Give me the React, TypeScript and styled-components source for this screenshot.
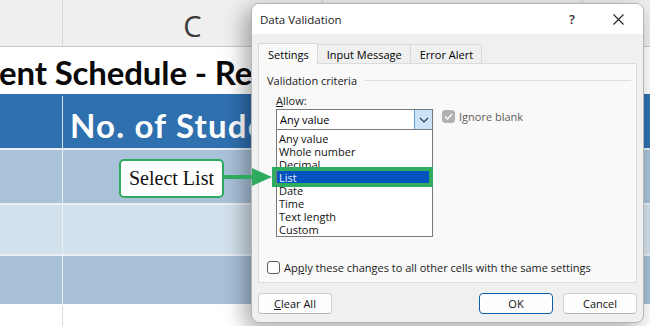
import React from 'react'
import styled, { createGlobalStyle } from 'styled-components'

const GlobalStyle = createGlobalStyle`
  html, body {
    margin: 0;
    padding: 0;
  }
  body {
    width: 650px;
    height: 326px;
    overflow: hidden;
    background: #ffffff;
  }
`

const options = ['Any value', 'Whole number', 'Decimal', 'List', 'Date', 'Time', 'Text length', 'Custom']
const picked = 'List'

const rows = [
  { tone: '#a9c2da', height: 53 },
  { tone: '#d3e1ec', height: 49 },
  { tone: '#a8c1d9', height: 48 },
]

const App = () => {
  return (
    <Page>
      <GlobalStyle />
      <Sheet>
        <HeaderRow>
          <FirstCol />
          <ColHead>C</ColHead>
          <ColHead />
        </HeaderRow>
        <TitleRow>
          <TitleText>ent Schedule - Report</TitleText>
        </TitleRow>
        <Row $bg="#2f70af" $h={52} $line="transparent">
          <FirstCol $line="#d6e1ec" />
          <HeadText>No. of Students</HeadText>
        </Row>
        {rows.map((r, i) => (
          <Row key={i} $bg={r.tone} $h={r.height} $line="#e9eff5">
            <FirstCol $line="#e9eff5" />
            <DataCell />
          </Row>
        ))}
        <Row $bg="#ffffff" $h={20} $line="#ffffff">
          <FirstCol $line="#dadada" />
        </Row>
      </Sheet>

      <Callout>Select List</Callout>
      <Arrow width="48" height="22" viewBox="0 0 48 22">
        <line x1="0" y1="11" x2="30" y2="11" stroke="#2eab5f" strokeWidth="4" />
        <polygon points="28,2 48,11 28,20" fill="#2eab5f" />
      </Arrow>

      <Dialog>
        <TitleBar>
          <DialogTitle>Data Validation</DialogTitle>
          <Help>?</Help>
          <Close>
            <svg width="11" height="11" viewBox="0 0 11 11">
              <path d="M0.5 0.5 L10.5 10.5 M10.5 0.5 L0.5 10.5" stroke="#222" strokeWidth="1.1" />
            </svg>
          </Close>
        </TitleBar>
        <Body>
          <Tabs>
            <Tab $active>Settings</Tab>
            <Tab>Input Message</Tab>
            <Tab>Error Alert</Tab>
          </Tabs>
          <Panel>
            <Legend>
              <span>Validation criteria</span>
              <Rule />
            </Legend>
            <Criteria>
              <Label>
                <u>A</u>llow:
              </Label>
              <SelectRow>
                <SelectWrap>
                  <Select>
                    <span>Any value</span>
                    <Chevron>
                      <svg width="10" height="6" viewBox="0 0 10 6">
                        <path d="M1 1 L5 5 L9 1" fill="none" stroke="#333" strokeWidth="1.1" />
                      </svg>
                    </Chevron>
                  </Select>
                  <DropList>
                    {options.map(o => (
                      <Option key={o} $on={o === picked}>
                        {o}
                      </Option>
                    ))}
                    <Marker />
                  </DropList>
                </SelectWrap>
                <CheckLine $muted>
                  <Box $checked>
                    <svg width="9" height="7" viewBox="0 0 9 7">
                      <path d="M1 3.5 L3.5 6 L8 1" fill="none" stroke="#fff" strokeWidth="1.3" />
                    </svg>
                  </Box>
                  Ignore blank
                </CheckLine>
              </SelectRow>
            </Criteria>
            <ApplyRow>
              <Box />
              <span>
                Ap<u>p</u>ly these changes to all other cells with the same settings
              </span>
            </ApplyRow>
          </Panel>
          <Buttons>
            <Button>
              <u>C</u>lear All
            </Button>
            <Spacer />
            <Button $primary>OK</Button>
            <Button>Cancel</Button>
          </Buttons>
        </Body>
      </Dialog>
    </Page>
  )
}

export default App

const Page = styled.div`
  position: relative;
  width: 650px;
  height: 326px;
  overflow: hidden;
`

const Sheet = styled.div`
  display: flex;
  flex-direction: column;
  width: 650px;
  height: 326px;
  font-family: Lato, 'Open Sans', sans-serif;
`

const HeaderRow = styled.div`
  display: flex;
  height: 48px;
  background: #efefef;
  border-bottom: 1px solid #c9c9c9;
`

const FirstCol = styled.div<{ $line?: string }>`
  width: 62px;
  flex: none;
  border-right: 1px solid ${p => p.$line || '#d6d6d6'};
`

const ColHead = styled.div`
  width: 260px;
  flex: none;
  display: flex;
  align-items: center;
  justify-content: center;
  border-right: 1px solid #d6d6d6;
  font-family: 'Open Sans', sans-serif;
  font-size: 29px;
  color: #3a3a3a;
  padding-top: 4px;
  box-sizing: border-box;
`

const TitleRow = styled.div`
  display: flex;
  align-items: center;
  height: 49px;
  background: #fff;
  overflow: hidden;
  white-space: nowrap;
`

const TitleText = styled.div`
  margin-left: -1px;
  padding-top: 3px;
  font-weight: 700;
  font-size: 33px;
  letter-spacing: -0.15px;
  color: #0a0a0a;
`

const Row = styled.div<{ $bg: string; $h: number; $line: string }>`
  display: flex;
  flex: none;
  height: ${p => p.$h}px;
  background: ${p => p.$bg};
  border-top: 2px solid ${p => p.$line};
  box-sizing: content-box;
  overflow: hidden;
  white-space: nowrap;
`

const HeadText = styled.div`
  display: flex;
  align-items: center;
  padding-left: 7px;
  padding-top: 5px;
  font-weight: 700;
  font-size: 33px;
  letter-spacing: 1.2px;
  color: #ffffff;
`

const DataCell = styled.div`
  flex: 1;
`

const Callout = styled.div`
  position: absolute;
  left: 119px;
  top: 159px;
  width: 105px;
  height: 39px;
  box-sizing: border-box;
  display: flex;
  align-items: center;
  justify-content: center;
  background: #fff;
  border: 2px solid #2eab5f;
  border-radius: 5px;
  font-family: 'Liberation Serif', serif;
  font-size: 20px;
  color: #111;
`

const Arrow = styled.svg`
  position: absolute;
  left: 224px;
  top: 166px;
  z-index: 3;
`

const Dialog = styled.div`
  position: absolute;
  left: 251px;
  top: 3px;
  width: 393px;
  height: 320px;
  box-sizing: border-box;
  display: flex;
  flex-direction: column;
  background: #f0f0f0;
  border: 1px solid #b5b5b5;
  border-radius: 8px;
  box-shadow: -6px 6px 22px rgba(0, 0, 0, 0.35);
  overflow: hidden;
  font-family: 'Open Sans', 'Noto Sans', sans-serif;
  font-size: 11px;
  color: #000;
  z-index: 2;
`

const TitleBar = styled.div`
  display: flex;
  align-items: center;
  height: 30px;
  flex: none;
  padding-left: 8px;
  background: #fff;
`

const DialogTitle = styled.div`
  flex: 1;
  font-size: 11.5px;
  color: #1a1a1a;
`

const Help = styled.div`
  width: 20px;
  text-align: center;
  font-size: 13px;
  font-weight: 600;
  color: #333;
  margin-right: 26px;
`

const Close = styled.div`
  width: 20px;
  display: flex;
  justify-content: center;
  margin-right: 15px;
`

const Body = styled.div`
  flex: 1;
  display: flex;
  flex-direction: column;
  padding: 8px 6px 8px 6px;
`

const Tabs = styled.div`
  display: flex;
  align-items: flex-end;
  height: 21px;
`

const Tab = styled.div<{ $active?: boolean }>`
  position: relative;
  height: ${p => (p.$active ? 21 : 19)}px;
  box-sizing: border-box;
  display: flex;
  align-items: center;
  padding: 0 8px 0 9px;
  border: 1px solid #d9d9d9;
  border-bottom: none;
  margin-left: -1px;
  background: ${p => (p.$active ? '#f9f9f9' : '#f0f0f0')};
  margin-bottom: ${p => (p.$active ? -1 : 0)}px;
  z-index: ${p => (p.$active ? 1 : 0)};
  &:first-child {
    margin-left: 0;
  }
`

const Panel = styled.div`
  flex: 1;
  display: flex;
  flex-direction: column;
  background: #f9f9f9;
  border: 1px solid #dcdcdc;
  padding: 9px 5px 7px 8px;
`

const Legend = styled.div`
  display: flex;
  align-items: center;
  height: 15px;
  color: #1a1a1a;
`

const Rule = styled.div`
  flex: 1;
  height: 1px;
  margin-left: 7px;
  background: #dddddd;
`

const Criteria = styled.div`
  padding-left: 9px;
  padding-top: 5px;
`

const Label = styled.div`
  height: 15px;
  line-height: 15px;
  color: #1a1a1a;
`

const SelectRow = styled.div`
  display: flex;
  align-items: flex-start;
  gap: 9px;
  margin-top: 1px;
`

const SelectWrap = styled.div`
  position: relative;
  width: 157px;
`

const Select = styled.div`
  display: flex;
  align-items: stretch;
  height: 21px;
  box-sizing: border-box;
  background: #fff;
  border: 1px solid #7a7a7a;
  span {
    flex: 1;
    display: flex;
    align-items: center;
    padding-left: 3px;
  }
`

const Chevron = styled.div`
  width: 17px;
  display: flex;
  align-items: center;
  justify-content: center;
  background: #cce4f7;
  border-left: 1px solid #5a9fdc;
`

const DropList = styled.div`
  position: absolute;
  left: 0;
  top: 20px;
  width: 157px;
  height: 108px;
  box-sizing: border-box;
  padding: 2px 3px 0 0;
  background: #fff;
  border: 1px solid #7a7a7a;
  z-index: 2;
`

const Option = styled.div<{ $on?: boolean }>`
  height: 13px;
  line-height: 13px;
  padding-left: 2px;
  background: ${p => (p.$on ? '#0553bf' : 'transparent')};
  color: ${p => (p.$on ? '#e8f0ff' : '#111')};
`

const Marker = styled.div`
  position: absolute;
  left: -5px;
  top: 37px;
  width: 161px;
  height: 20px;
  box-sizing: border-box;
  border: 4px solid #2eab5f;
`

const CheckLine = styled.div<{ $muted?: boolean }>`
  display: flex;
  align-items: center;
  gap: 4px;
  height: 14px;
  color: ${p => (p.$muted ? '#5c5c5c' : '#000')};
`

const Box = styled.div<{ $checked?: boolean }>`
  width: 13px;
  height: 13px;
  box-sizing: border-box;
  flex: none;
  display: flex;
  align-items: center;
  justify-content: center;
  border-radius: 3px;
  background: ${p => (p.$checked ? '#b2b2b2' : '#fff')};
  border: 1px solid ${p => (p.$checked ? '#b2b2b2' : '#5a5a5a')};
`

const ApplyRow = styled.div`
  display: flex;
  align-items: center;
  gap: 4px;
  margin-top: auto;
  height: 15px;
  color: #1a1a1a;
`

const Buttons = styled.div`
  display: flex;
  gap: 10px;
  margin-top: 10px;
`

const Spacer = styled.div`
  flex: 1;
`

const Button = styled.div<{ $primary?: boolean }>`
  width: 74px;
  height: 21px;
  box-sizing: border-box;
  display: flex;
  align-items: center;
  justify-content: center;
  background: #fdfdfd;
  border-radius: 4px;
  border: 1px solid ${p => (p.$primary ? '#0a5fad' : '#d0d0d0')};
  border-bottom-color: ${p => (p.$primary ? '#0a5fad' : '#b8b8b8')};
  color: #111;
`
